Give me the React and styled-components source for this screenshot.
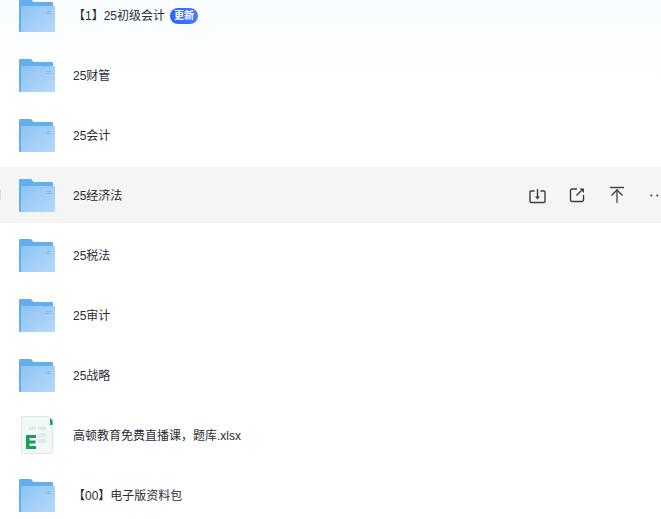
import React from 'react'
import styled, { createGlobalStyle } from 'styled-components'

const GlobalStyle = createGlobalStyle`
  html, body {
    margin: 0;
    padding: 0;
    background: #fff;
  }
`

const Page = styled.div`
  width: 661px;
  height: 519px;
  overflow: hidden;
  background: linear-gradient(180deg, #f9fdff 0, #ffffff 100px);
  font-family: "Liberation Sans", "Noto Sans CJK SC", sans-serif;
`

const List = styled.ul`
  list-style: none;
  margin: -13px 0 0;
  padding: 0;
  display: flex;
  flex-direction: column;
  gap: 4px;
`

const Row = styled.li`
  position: relative;
  box-sizing: border-box;
  height: 56px;
  display: flex;
  align-items: center;
  padding: 2px 0 0 19px;
  background: ${props => props.$active ? '#f5f5f5' : 'transparent'};
`

const Check = styled.span`
  position: absolute;
  left: -13px;
  top: 21px;
  width: 14px;
  height: 14px;
  box-sizing: border-box;
  border: 1px solid #d9d9d9;
  border-radius: 3px;
  background: #fff;
`

const Folder = styled.svg`
  width: 36px;
  height: 36px;
  flex: none;
  display: block;
`

const Sheet = styled.svg`
  width: 36px;
  height: 40px;
  flex: none;
  display: block;
`

const Name = styled.span`
  margin-left: 18px;
  font-size: 12px;
  line-height: 16px;
  color: #2a2c33;
  white-space: nowrap;
`

const Badge = styled.span`
  margin-left: 5px;
  width: 28px;
  height: 16px;
  border-radius: 8px;
  background: linear-gradient(90deg, #2a63f6, #4a7bfb);
  color: #fff;
  font-size: 10px;
  font-weight: 700;
  line-height: 16px;
  text-align: center;
`

const Actions = styled.div`
  margin-left: auto;
  margin-right: -6px;
  display: flex;
  align-items: center;
  gap: 20px;
`

const ActionIcon = styled.svg`
  width: 20px;
  height: 20px;
  flex: none;
  fill: none;
  stroke: #3d3d42;
  stroke-width: 1.4;
`

const FolderIcon = ({ id }) => (
  <Folder viewBox="0 0 36 36">
    <defs>
      <linearGradient id={id} x1="0" y1="0" x2="1" y2="1">
        <stop offset="0" stopColor="#8cc3f3" />
        <stop offset="1" stopColor="#b7d9fb" />
      </linearGradient>
    </defs>
    <path d="M0 2a1 1 0 0 1 1-1h11l2.500 3H33a1 1 0 0 1 1 1v29H1a1 1 0 0 1-1-1z" fill="#64aeee" />
    <path d="M2 8h33a1 1 0 0 1 1 1v25H2z" fill={`url(#${id})`} />
    <path d="M27 13.500h5M27 15.500h5" stroke="#84b8e8" strokeWidth="1" />
  </Folder>
)

const SheetIcon = () => (
  <Sheet viewBox="0 0 36 40">
    <path d="M3.500 0.500h26l4 4v32a1 1 0 0 1-1 1h-29a1 1 0 0 1-1-1v-35a1 1 0 0 1 1-1z" fill="#f1f8f5" stroke="#d9ebe3" />
    <path d="M31 2l2.500 2.500V9H31z" fill="#1a9c5b" />
    <path d="M9.500 10.500H17V14H9.500zM19 10.500h8V14h-8zM19 17h8v4h-8zM19 23h8v4h-8z" fill="#dcece5" />
    <path d="M7 19h10v3h-6.500v2.500h6v3h-6V30H17v3H7z" fill="#1a9c5b" />
  </Sheet>
)

const rows = [
  { name: '【1】25初级会计', badge: '更新' },
  { name: '25财管' },
  { name: '25会计' },
  { name: '25经济法', active: true },
  { name: '25税法' },
  { name: '25审计' },
  { name: '25战略' },
  { name: '高顿教育免费直播课，题库.xlsx', sheet: true },
  { name: '【00】电子版资料包' },
]

export default function App() {
  return (
    <Page>
      <GlobalStyle />
      <List>
        {rows.map((row, i) => (
          <Row key={row.name} $active={row.active}>
            {row.active && <Check />}
            {row.sheet ? <SheetIcon /> : <FolderIcon id={`folder-${i}`} />}
            <Name>{row.name}</Name>
            {row.badge && <Badge>{row.badge}</Badge>}
            {row.active && (
              <Actions>
                <ActionIcon viewBox="0 0 20 20">
                  <path d="M7.500 5H4a1 1 0 0 0-1 1v9.500a1 1 0 0 0 1 1h13a1 1 0 0 0 1-1V6a1 1 0 0 0-1-1h-3.500" />
                  <path d="M10.500 3v8" />
                  <path d="M8 10.500h5l-2.500 3z" fill="#3d3d42" stroke="none" />
                </ActionIcon>
                <ActionIcon viewBox="0 0 20 20">
                  <path d="M10 3H5a1.500 1.500 0 0 0-1.500 1.500v9.500a1.500 1.500 0 0 0 1.500 1.500h10a1.500 1.500 0 0 0 1.500-1.500V9" />
                  <path d="M9.500 9.500l5-5" />
                  <path d="M12.500 2.500h4.500V7z" fill="#3d3d42" stroke="none" />
                </ActionIcon>
                <ActionIcon viewBox="0 0 20 20">
                  <path d="M3 1.500h14" />
                  <path d="M10 3.500v13.500" stroke="#66666b" strokeWidth="1.600" />
                  <path d="M4.500 9.500L10 4l5.500 5.500" />
                </ActionIcon>
                <ActionIcon viewBox="0 0 20 20">
                  <circle cx="4.300" cy="9.500" r="1" fill="#3d3d42" stroke="none" />
                  <circle cx="10.300" cy="9.500" r="1" fill="#3d3d42" stroke="none" />
                  <circle cx="16.300" cy="9.500" r="1" fill="#3d3d42" stroke="none" />
                </ActionIcon>
              </Actions>
            )}
          </Row>
        ))}
      </List>
    </Page>
  )
}
